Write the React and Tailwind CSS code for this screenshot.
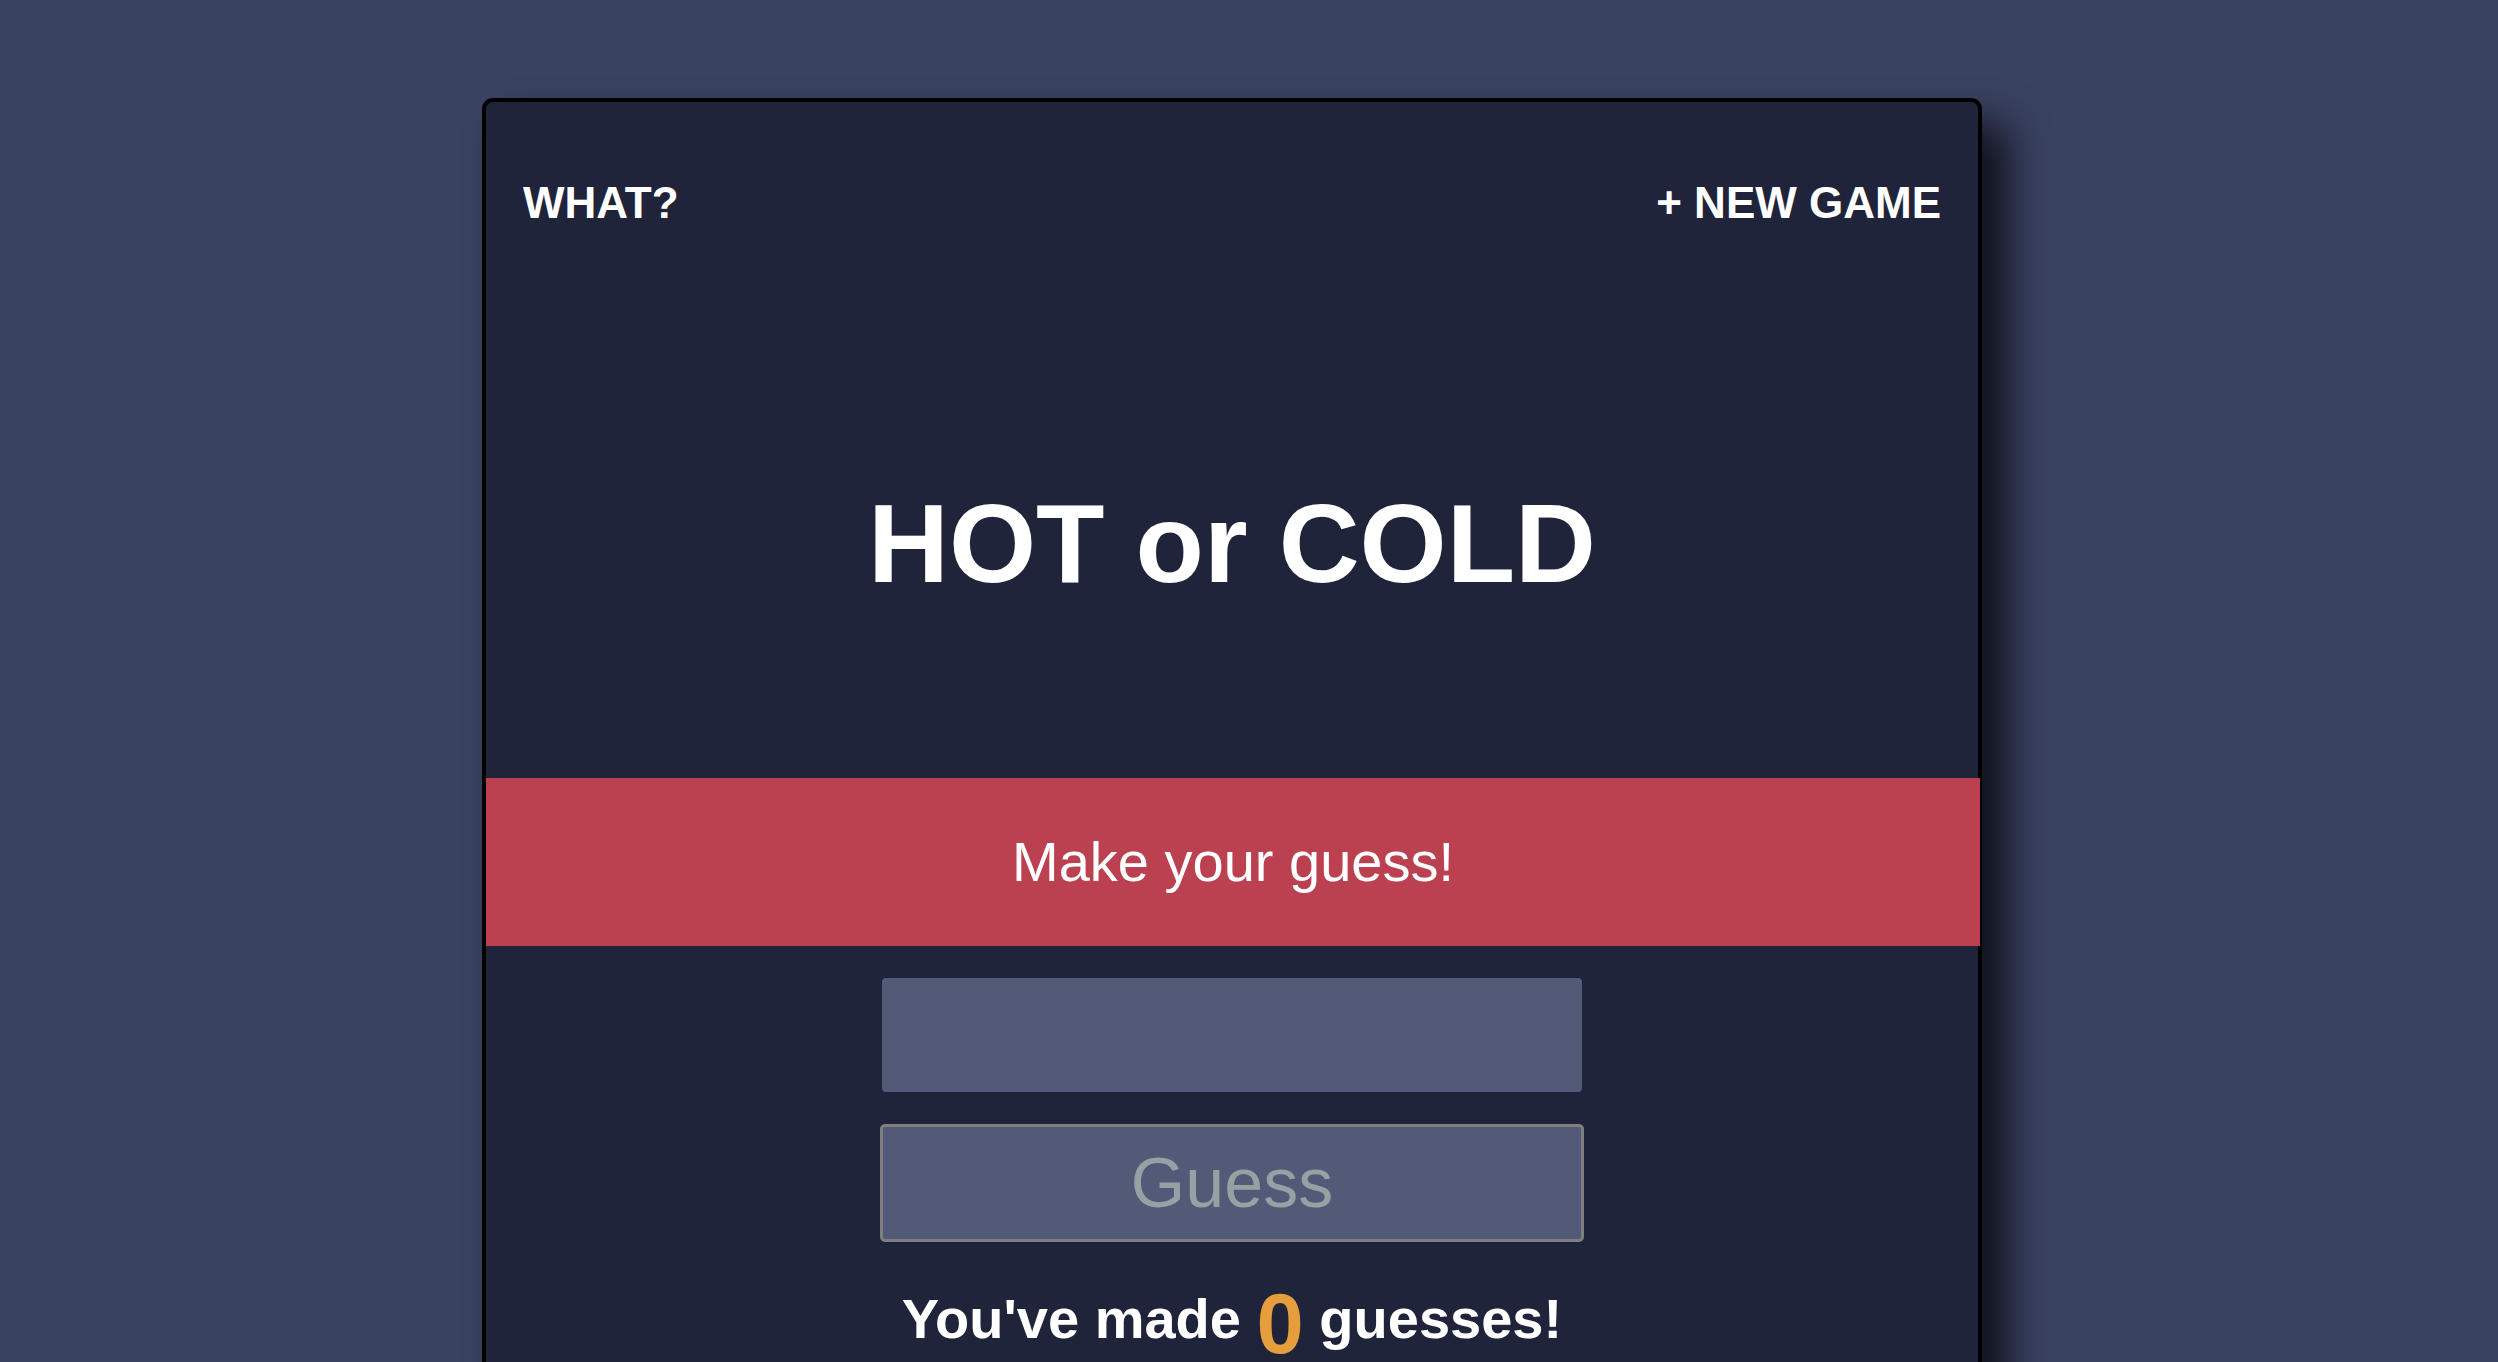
function Header() {
    return (
        <div className="flex items-center justify-between px-[37px] pt-[76px] text-[44px] font-bold leading-[50px] text-white">
            <a href="#" className="uppercase">What?</a>
            <a href="#" className="uppercase">+ New Game</a>
        </div>
    );
}

function GuessForm() {
    return (
        <form className="flex flex-col items-center" onSubmit={(e) => e.preventDefault()}>
            <input
                type="text"
                className="mt-[32px] h-[114px] w-[700px] rounded-[4px] bg-[#525a78] outline-none"
            />
            <button
                type="submit"
                className="mt-[32px] flex h-[118px] w-[704px] items-center justify-center rounded-[5px] border-[3px] border-[#7f7f7f] bg-[#525a78] text-[70px] leading-none text-[#95a1a3]"
            >
                Guess
            </button>
        </form>
    );
}

export default function App() {
    const count = 0;

    return (
        <div className="min-h-screen bg-[#3a4262] pb-[80px] pl-[482px] pt-[98px] font-['Liberation_Sans',Arial,sans-serif]">
            <div className="h-[1400px] w-[1500px] rounded-[11px] border-[4px] border-black bg-[#20243b] shadow-[26px_26px_40px_rgba(0,0,0,0.75)]">
                <Header />

                <h1 className="mt-[252px] text-center text-[112px] font-bold leading-[128px] text-white">
                    HOT or COLD
                </h1>

                <div className="mt-[170px] flex h-[168px] w-[calc(100%+2px)] items-center justify-center bg-[#bc4150] text-[56px] text-white">
                    Make your guess!
                </div>

                <GuessForm />

                <p className="mt-[39px] text-center text-[56px] font-bold leading-none text-white">
                    You've made{" "}
                    <span className="align-middle text-[85px] leading-none text-[#e59e3b]">{count}</span>{" "}
                    guesses!
                </p>
            </div>
        </div>
    );
}
